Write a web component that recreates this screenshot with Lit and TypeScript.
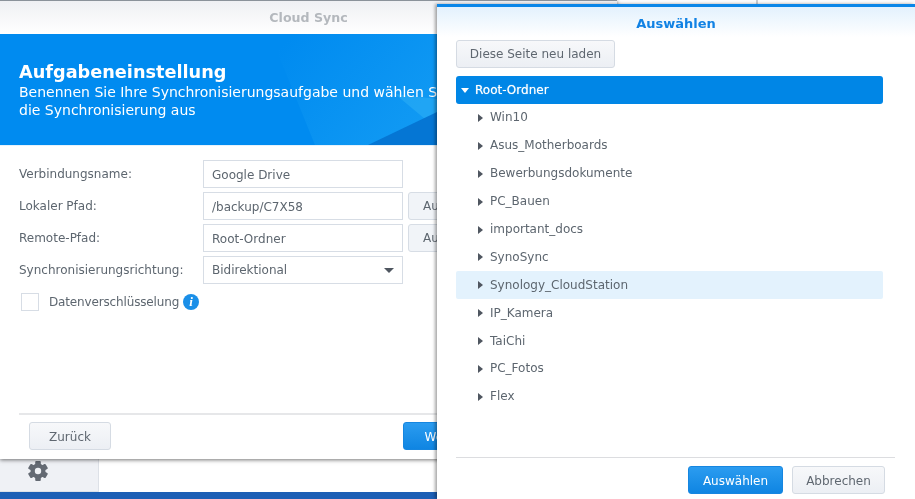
import { LitElement, html, css, svg } from "lit";
import { customElement } from "lit/decorators.js";

const folders = ["Win10","Asus_Motherboards","Bewerbungsdokumente","PC_Bauen","important_docs","SynoSync","Synology_CloudStation","IP_Kamera","TaiChi","PC_Fotos","Flex"];
const rows = [
  { label: "Verbindungsname:", value: "Google Drive", browse: false },
  { label: "Lokaler Pfad:", value: "/backup/C7X58", browse: true },
  { label: "Remote-Pfad:", value: "Root-Ordner", browse: true },
];
const gear = svg`<svg class="gear" width="20" height="20" viewBox="0 0 20 20">
  <g fill="#646a73">
    <circle cx="10" cy="10" r="7.500"/>
    ${[0, 60, 120, 180, 240, 300].map(a => svg`<rect x="7.200" y="0" width="5.600" height="5" rx="1" transform="rotate(${a} 10 10)"/>`)}
  </g>
  <circle cx="10" cy="10" r="3.200" fill="#eff1f5"/>
</svg>`;

@customElement("app-root")
export class AppRoot extends LitElement {
  static styles = css`
    :host { display: block; position: relative; width: 915px; height: 499px; overflow: hidden; background: #fff;
      font-family: "DejaVu Sans", sans-serif; font-size: 12px; color: #5d666f; filter: blur(0.3px); }
    * { box-sizing: border-box; }
    .topstrip { position: absolute; left: 617px; top: 0; width: 298px; height: 4px; background: #fbfbfc; }
    .topstrip i { display: block; width: 141px; height: 4px; border-right: 2px solid #c9ccd0; }
    .tab { position: absolute; left: 0; top: 459px; width: 99px; height: 33px; background: #eff1f5; border-right: 1px solid #dde1e7; border-bottom: 1px solid #dde1e7; display: flex; justify-content: center; padding: 2px 22px 0 0; }
    .gear { display: block; }
    .taskbar { position: absolute; left: 0; right: 0; top: 492px; height: 7px; background: #1c5fb5; }
    .back { position: absolute; left: 0; top: 0; width: 617px; height: 459px; background: #fff; border-top: 1px solid #8b929a; box-shadow: 0 1px 4px rgba(0,0,0,.55); display: flex; flex-direction: column; }
    .back-title { height: 33px; flex: none; background: linear-gradient(#eff0f3, #fff); text-align: center; line-height: 34px; font-weight: bold; font-size: 12.600px; color: #b4b8bd; white-space: nowrap; }
    .banner { height: 112px; flex: none; position: relative; overflow: hidden; background: #008bf0; color: #fff; padding: 28px 0 0 19px; border-bottom: 1px solid #e5f2fc; }
    .banner svg { position: absolute; left: 0; top: 0; }
    .banner h1 { position: relative; margin: 0; font-size: 17.700px; line-height: 21px; font-weight: bold; white-space: nowrap; }
    .banner p { position: relative; margin: 0; font-size: 14px; line-height: 18px; white-space: nowrap; }
    .form { flex: 1; padding: 14px 0 0 19px; display: flex; flex-direction: column; gap: 4px; overflow: hidden; }
    .row { display: flex; align-items: center; height: 28px; white-space: nowrap; }
    .label { width: 184px; flex: none; }
    .input { width: 200px; height: 28px; flex: none; border: 1px solid #d7dde5; padding: 1px 8px 0 8px; display: flex; align-items: center; justify-content: space-between; }
    .select { padding-top: 0; }
    .browse { height: 28px; flex: none; margin-left: 5px; padding: 0 14px; line-height: 26px; border: 1px solid #d7dde5; border-radius: 3px; background: #f1f4f8; }
    .caret { width: 0; height: 0; border-left: 5.500px solid transparent; border-right: 5.500px solid transparent; border-top: 5px solid #4f5660; }
    .check { display: flex; align-items: center; margin: 4px 0 0 2px; height: 20px; }
    .box { width: 18px; height: 18px; border: 1px solid #d7dde5; flex: none; margin-right: 10px; }
    .check span { letter-spacing: -0.15px; }
    .info { width: 16px; height: 16px; border-radius: 50%; background: #1a8fe8; color: #fff; flex: none; margin-left: 4px; font: italic bold 13px/16px "Liberation Serif", serif; text-align: center; }
    .back-foot { flex: none; margin-left: 19px; height: 46px; border-top: 2px solid #e6e7e9; padding: 7px 30px 0 10px; display: flex; gap: 9px; }
    .btn { height: 28px; border: 1px solid #d5dbe3; border-radius: 3px; background: linear-gradient(#f7f8fa, #eceff4); line-height: 27px; text-align: center; white-space: nowrap; color: #5f6770; }
    .low { line-height: 28px; }
    .primary { border-color: #1686e0; background: linear-gradient(#2b9cf0, #0f85e2); color: #fff; }
    .zurueck { width: 82px; margin-right: auto; }
    .weiter { width: 82px; }
    .wide { width: 95px; }
    .cancel { width: 93px; }
    .dialog { position: absolute; left: 437px; top: 4px; width: 478px; height: 495px; background: #fff; border-top: 3px solid #0a86e8; box-shadow: -2px 0 3px rgba(0,0,0,.35); display: flex; flex-direction: column; padding-left: 19px; }
    .grad { position: absolute; left: 0; right: 0; top: 0; height: 30px; background: linear-gradient(#e3f1fd, #fff); }
    .dlg-title { position: relative; flex: none; height: 33px; margin-left: -19px; text-align: center; font-weight: bold; font-size: 13px; line-height: 33px; color: #1182e4; }
    .reload { position: relative; flex: none; width: 159px; }
    .tree { flex: 1; width: 427px; margin-top: 8px; }
    .node { height: 27.900px; display: flex; align-items: center; white-space: nowrap; padding-left: 22px; border-radius: 2px; }
    .node span { padding-bottom: 1px; }
    .tri { width: 0; height: 0; border-top: 4px solid transparent; border-bottom: 4px solid transparent; border-left: 5px solid #4f5660; margin-right: 7px; }
    .root { height: 28px; background: #0086e6; color: #fff; padding-left: 5px; border-radius: 3px; text-shadow: 0 0 1px rgba(255,255,255,.7); }
    .root .tri { border-left: 4px solid transparent; border-right: 4px solid transparent; border-top: 5px solid #fff; border-bottom: 0; margin-right: 6px; }
    .active { background: #e3f2fd; }
    .dlg-foot { flex: none; width: 439px; height: 42px; border-top: 1px solid #dcdde0; padding: 8px 10px 0 0; display: flex; justify-content: flex-end; gap: 9px; }
  `;

  render() {
    return html`
      <div class="topstrip"><i></i></div>
      <div class="tab">${gear}</div>
      <div class="taskbar"></div>
      <section class="back">
        <div class="back-title">Cloud Sync</div>
        <div class="banner">
          <svg width="617" height="111" viewBox="0 0 617 111">
            <defs>
              <linearGradient id="sheen" x1="0" y1="0" x2="1" y2="0.6">
                <stop offset="0.1" stop-color="#008bf0"/>
                <stop offset="1" stop-color="#1099f3"/>
              </linearGradient>
            </defs>
            <polygon points="270,0 437,0 437,111 315,111" fill="url(#sheen)"/>
            <polygon points="395,60 437,95 437,65" fill="#2badf5" opacity=".6"/>
            <polygon points="368,111 437,78 437,111" fill="#0576d4"/>
          </svg>
          <h1>Aufgabeneinstellung</h1>
          <p>Benennen Sie Ihre Synchronisierungsaufgabe und wählen Sie<br>die Synchronisierung aus</p>
        </div>
        <div class="form">
          ${rows.map(r => html`<div class="row"><div class="label">${r.label}</div><div class="input">${r.value}</div>${r.browse ? html`<div class="browse">Auswählen</div>` : ""}</div>`)}
          <div class="row"><div class="label">Synchronisierungsrichtung:</div><div class="input select">Bidirektional<i class="caret"></i></div></div>
          <div class="check"><div class="box"></div><span>Datenverschlüsselung</span><div class="info">i</div></div>
        </div>
        <div class="back-foot">
          <div class="btn low zurueck">Zurück</div>
          <div class="btn low primary weiter">Weiter</div>
          <div class="btn low cancel">Abbrechen</div>
        </div>
      </section>
      <section class="dialog">
        <div class="grad"></div>
        <div class="dlg-title">Auswählen</div>
        <div class="btn reload">Diese Seite neu laden</div>
        <div class="tree">
          <div class="node root"><i class="tri"></i><span>Root-Ordner</span></div>
          ${folders.map(f => html`<div class="node ${f === "Synology_CloudStation" ? "active" : ""}"><i class="tri"></i><span>${f}</span></div>`)}
        </div>
        <div class="dlg-foot">
          <div class="btn low primary wide">Auswählen</div>
          <div class="btn low cancel">Abbrechen</div>
        </div>
      </section>
    `;
  }
}
